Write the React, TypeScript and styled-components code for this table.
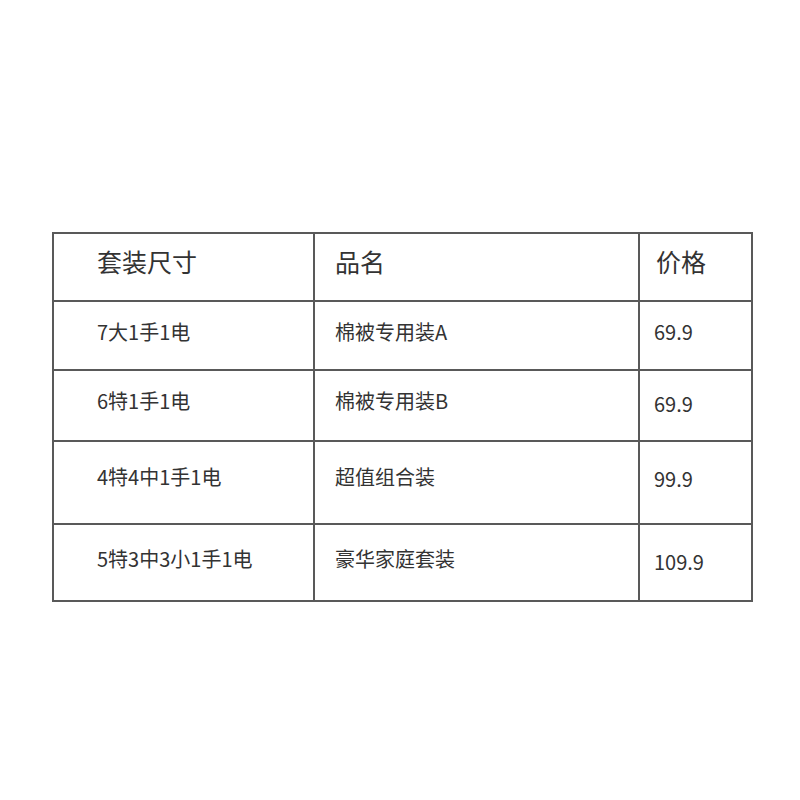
import React from 'react'
import styled, { createGlobalStyle } from 'styled-components'

const GlobalStyle = createGlobalStyle`
  body {
    margin: 0;
    background: #ffffff;
    font-family: "Noto Sans CJK SC", "Noto Sans", sans-serif;
    color: #333333;
  }
`

const Page = styled.div`
  width: 800px;
  height: 800px;
  box-sizing: border-box;
  padding: 232px 0 0 52px;
`

const Table = styled.table`
  border-collapse: collapse;
  table-layout: fixed;
  width: 699px;
`

const Row = styled.tr<{ $height: number }>`
  height: ${p => p.$height}px;
`

const HeadCell = styled.th<{ $indent: number }>`
  border: 2px solid #595959;
  padding: 0 0 12px ${p => p.$indent}px;
  font-size: 25px;
  font-weight: 400;
  text-align: left;
  vertical-align: middle;
  color: #333333;
  line-height: 1.4;
`

// $shift < 0 lifts the text, > 0 lowers it
const Cell = styled.td<{ $indent: number; $shift: number }>`
  border: 2px solid #595959;
  padding: ${p => (p.$shift > 0 ? `${p.$shift}px 0 0` : `0 0 ${-p.$shift}px`)} ${p => p.$indent}px;
  font-size: 20px;
  text-align: left;
  vertical-align: middle;
  color: #333333;
  line-height: 1.4;
`

const rows = [
  { size: '7大1手1电', name: '棉被专用装A', price: '69.9', height: 69, shift: -8, priceShift: -8 },
  { size: '6特1手1电', name: '棉被专用装B', price: '69.9', height: 71, shift: -9, priceShift: -4 },
  { size: '4特4中1手1电', name: '超值组合装', price: '99.9', height: 83, shift: -12, priceShift: -8 },
  { size: '5特3中3小1手1电', name: '豪华家庭套装', price: '109.9', height: 77, shift: -8, priceShift: -1 },
]

const App = () => (
  <Page>
    <GlobalStyle />
    <Table>
      <colgroup>
        <col style={{ width: 261 }} />
        <col style={{ width: 325 }} />
        <col style={{ width: 113 }} />
      </colgroup>
      <thead>
        <Row $height={68}>
          <HeadCell $indent={43}>套装尺寸</HeadCell>
          <HeadCell $indent={20}>品名</HeadCell>
          <HeadCell $indent={16}>价格</HeadCell>
        </Row>
      </thead>
      <tbody>
        {rows.map(r => (
          <Row key={r.size} $height={r.height}>
            <Cell $indent={43} $shift={r.shift}>{r.size}</Cell>
            <Cell $indent={20} $shift={r.shift}>{r.name}</Cell>
            <Cell $indent={14} $shift={r.priceShift}>{r.price}</Cell>
          </Row>
        ))}
      </tbody>
    </Table>
  </Page>
)

export default App
